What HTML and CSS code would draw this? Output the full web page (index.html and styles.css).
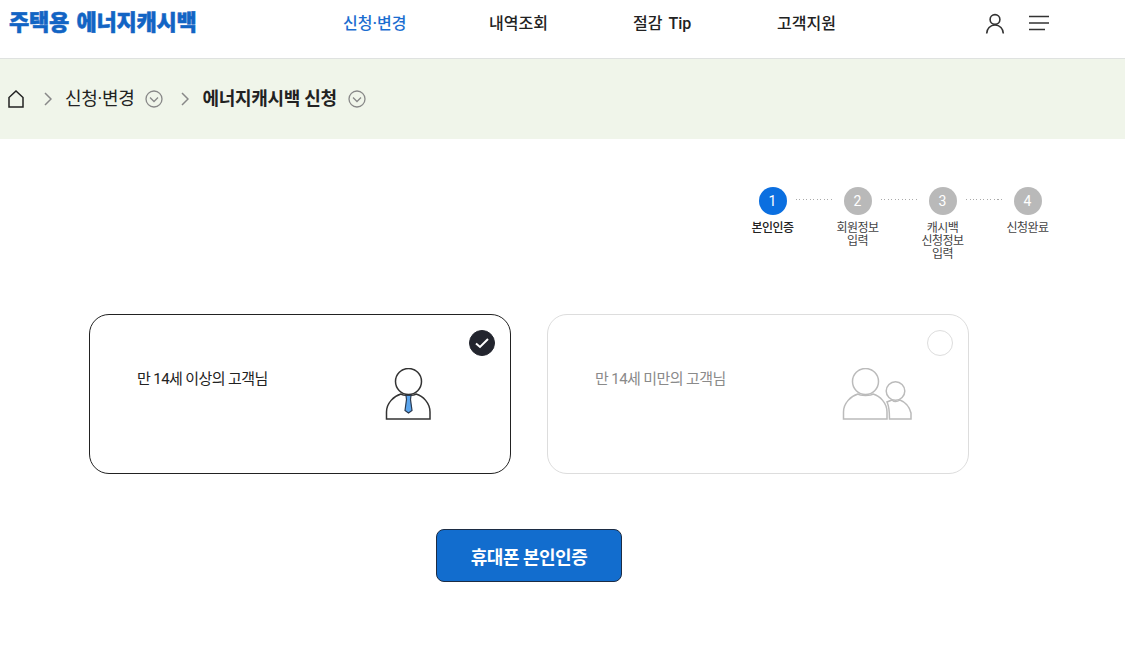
FILE: index.html
```html
<!DOCTYPE html>
<html lang="ko">
<head>
<meta charset="utf-8">
<title>주택용 에너지캐시백</title>
<link rel="stylesheet" href="styles.css">
</head>
<body>
<header class="header">
  <a class="logo">주택용 에너지캐시백</a>
  <nav class="nav">
    <a class="nav-item active">신청·변경</a>
    <a class="nav-item">내역조회</a>
    <a class="nav-item">절감 Tip</a>
    <a class="nav-item">고객지원</a>
  </nav>
  <div class="tools">
    <svg class="icon-user" width="20" height="22" viewBox="0 0 20 22" fill="none" stroke="#333" stroke-width="1.6"><circle cx="10" cy="6.500" r="4.900"/><path d="M1.700 20.500c0-4.800 3.500-8.500 8.300-8.500s8.300 3.700 8.300 8.500"/></svg>
    <svg class="icon-menu" width="20" height="16" viewBox="0 0 20 16" fill="none" stroke="#333" stroke-width="1.500"><path d="M0 1.500h20M0 8h20M0 14.500h16"/></svg>
  </div>
</header>
<div class="crumbs">
  <svg class="home" width="16" height="18" viewBox="0 0 16 18" fill="none" stroke="#222" stroke-width="1.500"><path d="M1 17V7.500L8 1l7 6.500V17z"/></svg>
  <svg class="chev" width="8" height="14" viewBox="0 0 8 14" fill="none" stroke="#888" stroke-width="1.500"><path d="M1 1l6 6-6 6"/></svg>
  <span class="crumb">신청·변경</span>
  <svg class="down" width="18" height="18" viewBox="0 0 18 18" fill="none" stroke="#888" stroke-width="1.300"><circle cx="9" cy="9" r="8"/><path d="M5 7.500l4 4 4-4"/></svg>
  <svg class="chev chev-2" width="8" height="14" viewBox="0 0 8 14" fill="none" stroke="#888" stroke-width="1.500"><path d="M1 1l6 6-6 6"/></svg>
  <strong class="crumb current">에너지캐시백 신청</strong>
  <svg class="down" width="18" height="18" viewBox="0 0 18 18" fill="none" stroke="#888" stroke-width="1.300"><circle cx="9" cy="9" r="8"/><path d="M5 7.500l4 4 4-4"/></svg>
</div>
<main class="main">
  <ol class="steps">
    <li class="step on"><span class="num">1</span><span class="label">본인인증</span></li>
    <li class="step"><span class="num">2</span><span class="label">회원정보<br>입력</span></li>
    <li class="step"><span class="num">3</span><span class="label">캐시백<br>신청정보<br>입력</span></li>
    <li class="step"><span class="num">4</span><span class="label">신청완료</span></li>
  </ol>
  <div class="cards">
    <div class="card selected">
      <span class="card-text">만 14세 이상의 고객님</span>
      <svg class="card-icon" width="46" height="52" viewBox="0 0 46 52" fill="none" stroke="#333" stroke-width="1.500">
        <circle cx="23.500" cy="13.500" r="13"/>
        <path d="M1.500 51V44C1.500 35 9 28 16 26C18 28 29 28 31 26C38 28 45 35 45 44V51Z"/>
        <path d="M21 27.500h5l-.5 4 1.500 11-3.500 2.500-3.500-2.500 1.500-11z" fill="#5aa5ee" stroke="#2a3a50" stroke-width="1.200"/>
      </svg>
      <span class="check on"><svg width="16" height="12" viewBox="0 0 16 12" fill="none" stroke="#fff" stroke-width="2"><path d="M2 6.500l4 3.500 8-8"/></svg></span>
    </div>
    <div class="card">
      <span class="card-text muted">만 14세 미만의 고객님</span>
      <svg class="card-icon card-icon-pair" width="70" height="52" viewBox="0 0 70 52" fill="none" stroke="#bbb" stroke-width="1.500">
        <circle cx="23.500" cy="13.500" r="13"/>
        <path d="M1.500 51V44C1.500 35 9 28 16 26C18 28 29 28 31 26C38 28 45 35 45 44V51Z"/>
        <circle cx="53.500" cy="23" r="9.300"/>
        <path d="M47.500 51C47.500 44 47.500 39 45 34L50 32C52 34 55 34 58 32C63 34 67.500 39 69 45V51H47.500Z"/>
      </svg>
      <span class="check"></span>
    </div>
  </div>
  <div class="actions"><button class="btn" type="button">휴대폰 본인인증</button></div>
</main>
</body>
</html>
```
FILE: styles.css
```css
* { box-sizing: border-box; }
html, body { margin: 0; padding: 0; }
body {
  width: 1125px;
  height: 662px;
  overflow: hidden;
  background: #fff;
  color: #222;
  font-family: Roboto, "Noto Sans CJK KR", sans-serif;
}
.header {
  height: 59px;
  border-bottom: 1px solid #dfe2e0;
  display: flex;
  align-items: flex-start;
  padding: 9px 0 0 9px;
}
.logo {
  width: 187px;
  font-size: 22px;
  line-height: 28px;
  font-weight: 900;
  color: #1264c4;
  white-space: nowrap;
  letter-spacing: -0.2px;
  word-spacing: 2px;
  -webkit-text-stroke: 0.5px #1264c4;
}
.nav {
  margin-left: 147px;
  display: grid;
  grid-template-columns: 146px 144px 144px 1fr;
  width: 494px;
  padding-top: 1px;
}
.nav-item {
  font-size: 16px;
  line-height: 28px;
  font-weight: 500;
  color: #222;
  white-space: nowrap;
  word-spacing: 2px;
}
.nav-item.active { color: #1a6dd0; }
.tools {
  margin-left: 148px;
  display: flex;
  align-items: flex-start;
  gap: 24px;
}
.icon-user { margin-top: 4px; }
.icon-menu { margin-top: 6px; }
.crumbs {
  height: 80px;
  background: #f0f5ea;
  display: flex;
  align-items: center;
  padding-left: 8px;
}
.chev { margin-left: 20px; margin-right: 13px; }
.chev-2 { margin-left: 18px; margin-right: 13px; }
.crumb {
  font-size: 18px;
  line-height: 24px;
  letter-spacing: -0.3px;
  color: #222;
  font-weight: 400;
  white-space: nowrap;
}
.crumb.current { font-weight: 700; }
.down { margin-left: 11px; }
.main { display: flex; flex-direction: column; }
.steps {
  list-style: none;
  margin: 48px 0 0 730px;
  padding: 0;
  display: flex;
  height: 127px;
}
.step {
  position: relative;
  width: 85px;
  display: flex;
  flex-direction: column;
  align-items: center;
}
.step + .step::before {
  content: "";
  position: absolute;
  left: -19px;
  width: 38px;
  top: 12px;
  height: 1px;
  background: repeating-linear-gradient(90deg, #aaa 0 1px, transparent 1px 3.500px);
}
.num {
  width: 28px;
  height: 28px;
  border-radius: 50%;
  background: #b9b9b9;
  color: #fff;
  font-size: 14px;
  line-height: 28px;
  text-align: center;
}
.step.on .num { background: #0b6fe0; }
.label {
  margin-top: 7px;
  font-size: 12px;
  line-height: 13px;
  letter-spacing: -0.6px;
  text-align: center;
  color: #444;
}
.step.on .label { font-weight: 500; color: #222; }
.cards {
  margin-left: 89px;
  display: flex;
  gap: 36px;
}
.card {
  position: relative;
  width: 422px;
  height: 160px;
  border: 1px solid #ddd;
  border-radius: 20px;
  background: #fff;
}
.card.selected { border-color: #222; }
.card-text {
  position: absolute;
  left: 47px;
  top: 54px;
  font-size: 15px;
  line-height: 20px;
  letter-spacing: -0.6px;
  color: #222;
  white-space: nowrap;
}
.card-text.muted { color: #8a8a8a; }
.card-icon {
  position: absolute;
  left: 295px;
  top: 53px;
}
.card-icon-pair { left: 294px; }
.check {
  position: absolute;
  left: 379px;
  top: 15px;
  width: 26px;
  height: 26px;
  border-radius: 50%;
  border: 1px solid #ddd;
  background: #fff;
  display: flex;
  align-items: center;
  justify-content: center;
}
.check.on { background: #23252e; border-color: #23252e; }
.actions {
  margin-top: 55px;
  margin-left: 436px;
}
.btn {
  display: block;
  width: 186px;
  height: 53px;
  border: 1px solid #1c2c44;
  border-radius: 8px;
  background: #126dce;
  color: #fff;
  font-family: inherit;
  font-size: 18px;
  font-weight: 700;
  letter-spacing: -0.5px;
  padding: 0;
}
```
